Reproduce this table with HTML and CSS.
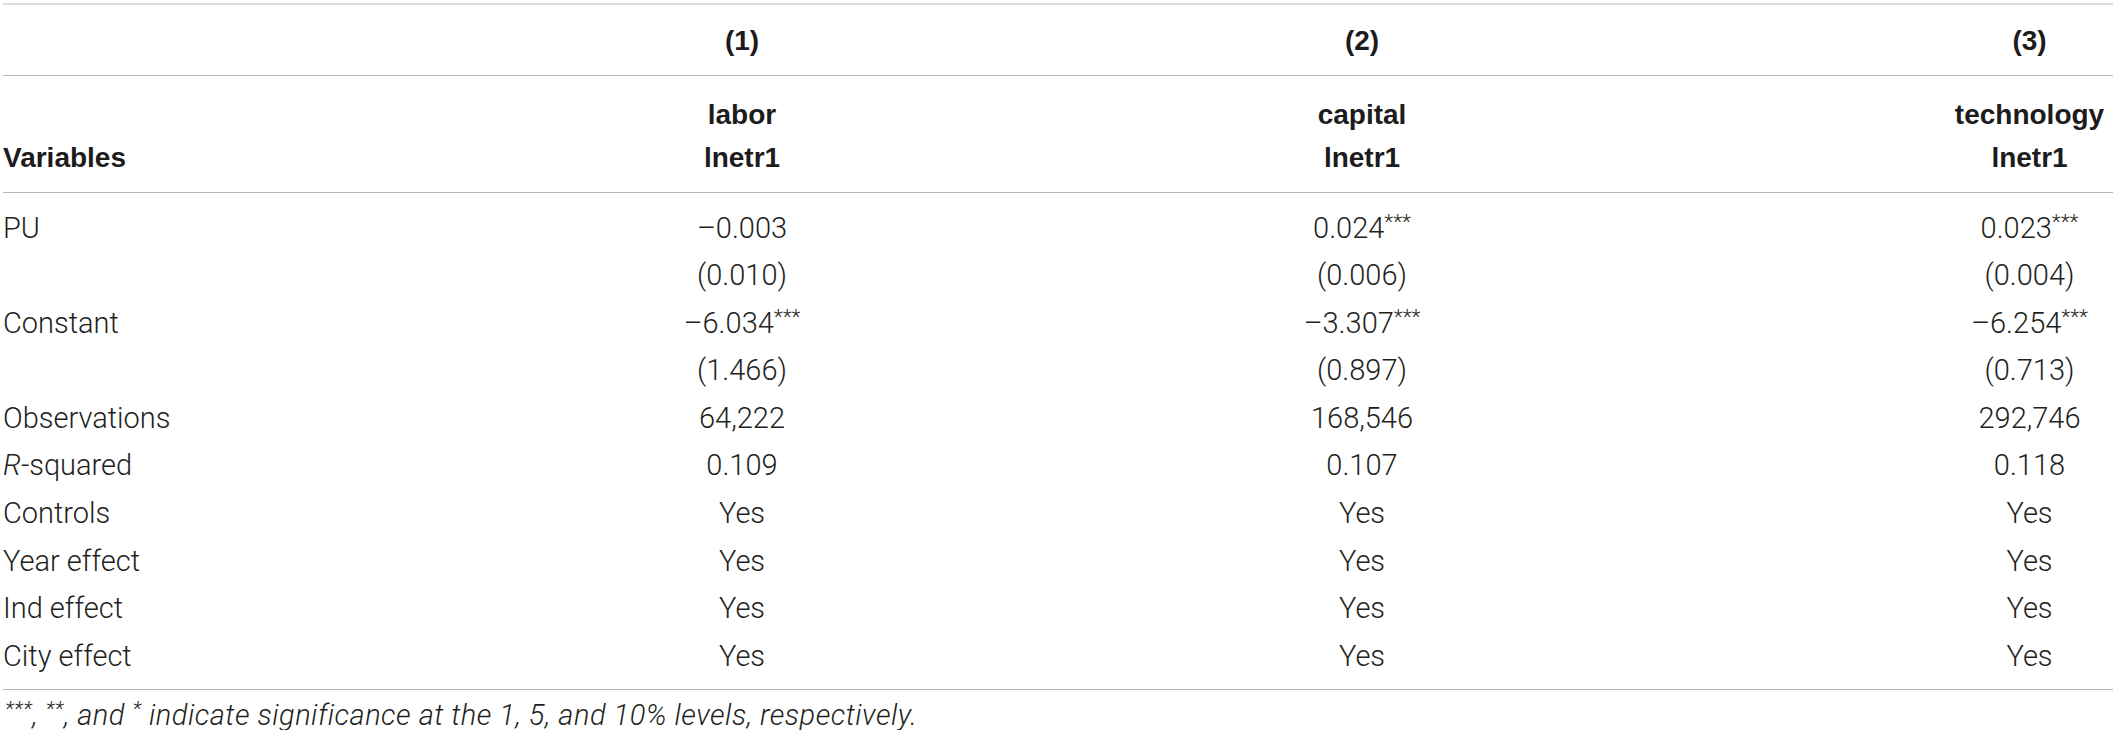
FILE: index.html
```html
<!DOCTYPE html>
<html lang="en">
<head>
<meta charset="utf-8">
<title>Regression table</title>
<link rel="stylesheet" href="styles.css">
</head>
<body>
<div class="wrap">
  <table class="reg">
    <colgroup>
      <col class="col-var">
      <col class="col-1">
      <col class="col-2">
      <col class="col-3">
    </colgroup>
    <thead>
      <tr class="h-num">
        <th class="var"></th>
        <th class="c1">(1)</th>
        <th class="c2">(2)</th>
        <th class="c3">(3)</th>
      </tr>
      <tr class="h-dep">
        <th class="var">Variables</th>
        <th class="c1">labor<br>lnetr1</th>
        <th class="c2">capital<br>lnetr1</th>
        <th class="c3">technology<br>lnetr1</th>
      </tr>
    </thead>
    <tbody>
      <tr class="first">
        <td class="var">PU</td>
        <td class="c1">–0.003</td>
        <td class="c2">0.024<sup>***</sup></td>
        <td class="c3">0.023<sup>***</sup></td>
      </tr>
      <tr>
        <td class="var"></td>
        <td class="c1">(0.010)</td>
        <td class="c2">(0.006)</td>
        <td class="c3">(0.004)</td>
      </tr>
      <tr>
        <td class="var">Constant</td>
        <td class="c1">–6.034<sup>***</sup></td>
        <td class="c2">–3.307<sup>***</sup></td>
        <td class="c3">–6.254<sup>***</sup></td>
      </tr>
      <tr>
        <td class="var"></td>
        <td class="c1">(1.466)</td>
        <td class="c2">(0.897)</td>
        <td class="c3">(0.713)</td>
      </tr>
      <tr>
        <td class="var">Observations</td>
        <td class="c1">64,222</td>
        <td class="c2">168,546</td>
        <td class="c3">292,746</td>
      </tr>
      <tr>
        <td class="var"><i>R</i>-squared</td>
        <td class="c1">0.109</td>
        <td class="c2">0.107</td>
        <td class="c3">0.118</td>
      </tr>
      <tr>
        <td class="var">Controls</td>
        <td class="c1">Yes</td>
        <td class="c2">Yes</td>
        <td class="c3">Yes</td>
      </tr>
      <tr>
        <td class="var">Year effect</td>
        <td class="c1">Yes</td>
        <td class="c2">Yes</td>
        <td class="c3">Yes</td>
      </tr>
      <tr>
        <td class="var">Ind effect</td>
        <td class="c1">Yes</td>
        <td class="c2">Yes</td>
        <td class="c3">Yes</td>
      </tr>
      <tr class="last">
        <td class="var">City effect</td>
        <td class="c1">Yes</td>
        <td class="c2">Yes</td>
        <td class="c3">Yes</td>
      </tr>
    </tbody>
  </table>
  <p class="note"><span class="star">***</span>, <span class="star">**</span>, and <span class="star">*</span> indicate significance at the 1, 5, and 10% levels, respectively.</p>
</div>
</body>
</html>
```

FILE: styles.css
```css
html, body {
  margin: 0;
  padding: 0;
  background: #ffffff;
}

.wrap {
  padding: 3px 0 0 3px;
  width: 2110px;
  color: #231f20;
  font-family: Roboto, "Liberation Sans", Arial, sans-serif;
}

.reg {
  width: 2110px;
  border-collapse: separate;
  border-spacing: 0;
  table-layout: fixed;
  border-top: 2px solid #dcdcdc;
}

.col-var { width: 617px; }
.col-1 { width: 244px; }
.col-2 { width: 996px; }
.col-3 { width: 253px; }

.reg th,
.reg td {
  padding: 0;
  text-align: center;
  white-space: nowrap;
}

.reg .var {
  text-align: left;
}

.reg .c3 {
  padding-left: 86px;
}

.reg th {
  font-family: "Liberation Sans", Arial, sans-serif;
  font-weight: 700;
  font-size: 28px;
  color: #1e1b1c;
}

.h-num th {
  height: 70px;
  box-sizing: border-box;
  padding-top: 12px;
  padding-bottom: 11px;
  line-height: 47px;
  vertical-align: top;
  border-bottom: 1px solid #b4b4b4;
}

.h-dep th {
  height: 117px;
  box-sizing: border-box;
  padding-top: 5px;
  padding-bottom: 13px;
  line-height: 43px;
  vertical-align: bottom;
  border-bottom: 1px solid #b4b4b4;
}

.reg td {
  font-size: 29px;
  font-weight: 300;
  line-height: 47.6px;
  height: 47.6px;
  vertical-align: top;
}

.reg tr.first td {
  padding-top: 11.5px;
}

.reg tr.last td {
  padding-bottom: 8.5px;
  border-bottom: 1px solid #b4b4b4;
}

.reg sup {
  font-size: 0.72em;
  line-height: 0;
  vertical-align: 0.45em;
}

.note {
  margin: 10px 0 0 2px;
  font-size: 29px;
  font-weight: 300;
  font-style: italic;
  line-height: 30px;
  letter-spacing: 0.5px;
}

.note .star {
  font-size: 0.72em;
  line-height: 0;
  vertical-align: 0.42em;
}
```
